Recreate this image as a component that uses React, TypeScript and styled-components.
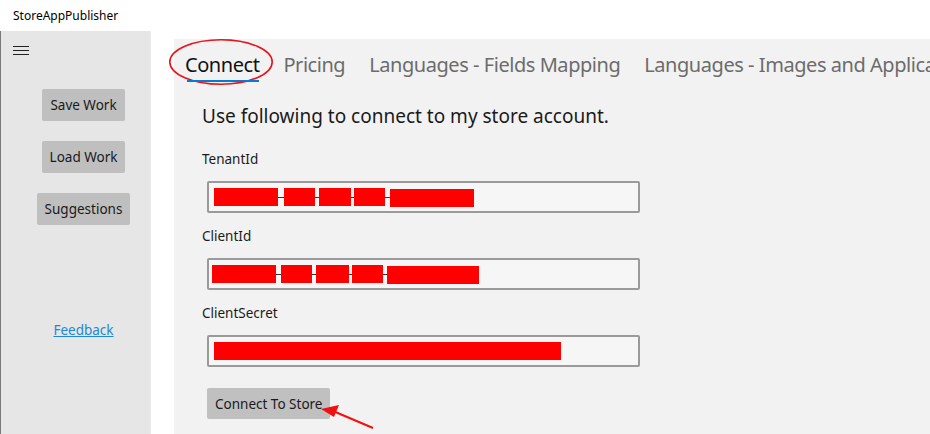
import React from "react";
import styled, { createGlobalStyle } from "styled-components";

const Global = createGlobalStyle`
  html, body { margin: 0; padding: 0; background: #ffffff; }
  body { width: 930px; height: 434px; overflow: hidden; font-family: "Segoe UI", "Noto Sans", "Open Sans", sans-serif; color: #1a1a1a; }
  * { box-sizing: border-box; }
`;

const Window = styled.div`
  width: 930px;
  height: 434px;
  display: flex;
  flex-direction: column;
  overflow: hidden;
  background: #ffffff;
`;

const TitleBar = styled.div`
  height: 31px;
  flex: none;
  display: flex;
  align-items: center;
  padding-left: 13px;
  font-size: 12px;
  color: #000;
`;

const Body = styled.div`
  flex: 1;
  display: flex;
  min-height: 0;
`;

const Sidebar = styled.div`
  width: 151px;
  flex: none;
  background: #e6e6e6;
  border-left: 1px solid #7a7a7a;
  border-right: 1px solid #ececec;
  display: flex;
  flex-direction: column;
  align-items: center;
  padding-left: 16px;
  position: relative;
`;

const Hamburger = styled.div`
  position: absolute;
  left: 12px;
  top: 15px;
  width: 16px;
  display: flex;
  flex-direction: column;
  gap: 3px;
  & > span { display: block; height: 1px; background: #222; }
`;

const SideButton = styled.button`
  height: 32px;
  padding: 0 8px;
  border: none;
  border-radius: 2px;
  background: #bfbfbf;
  font-family: inherit;
  font-size: 13.5px;
  color: #1a1a1a;
  margin-top: ${(p: { $mt: number }) => p.$mt}px;
`;

const FeedbackLink = styled.a`
  margin-top: 96px;
  font-size: 13.5px;
  color: #1f86d8;
  text-decoration: underline;
`;

const Spacer = styled.div`
  width: 23px;
  flex: none;
  background: #ffffff;
`;

const Main = styled.div`
  flex: 1;
  margin-top: 8px;
  background: #f2f2f2;
  position: relative;
  min-width: 0;
`;

const TabRow = styled.div`
  display: flex;
  gap: 24px;
  padding-left: 11px;
  height: 52px;
  align-items: flex-start;
  white-space: nowrap;
`;

const Tab = styled.div<{ $active?: boolean }>`
  position: relative;
  flex: none;
  font-size: 20px;
  letter-spacing: -0.45px;
  line-height: 28px;
  margin-top: 12px;
  color: ${(p) => (p.$active ? "#111" : "#6c6c6c")};
  padding-bottom: 3px;
  &::after {
    content: "";
    display: ${(p) => (p.$active ? "block" : "none")};
    position: absolute;
    left: 2px;
    right: 0;
    bottom: 0;
    height: 2px;
    background: #0a78d4;
  }
`;

const Ellipse = styled.svg`
  position: absolute;
  left: -16px;
  top: -12px;
  overflow: visible;
  pointer-events: none;
`;

const Content = styled.div`
  padding-left: 28px;
  display: flex;
  flex-direction: column;
`;

const Heading = styled.div`
  font-size: 19px;
  line-height: 26px;
  margin-top: 12px;
  color: #1a1a1a;
`;

const Label = styled.div`
  font-size: 13.5px;
  line-height: 18px;
  margin-top: ${(p: { $mt: number }) => p.$mt}px;
  color: #1a1a1a;
`;

const Field = styled.div<{ $pad: number }>`
  margin-left: 5px;
  margin-top: 13px;
  width: 433px;
  height: 32px;
  border: 2px solid #9a9a9a;
  border-radius: 2px;
  background: #f6f6f6;
  display: flex;
  align-items: center;
  padding-left: ${(p) => p.$pad}px;
`;

const Redact = styled.span<{ $w: number; $dy?: number }>`
  display: block;
  width: ${(p) => p.$w}px;
  height: 18px;
  background: #ff0000;
  flex: none;
  transform: translateY(${(p) => p.$dy ?? 0}px);
`;

const Dash = styled.span<{ $w: number }>`
  display: block;
  width: ${(p) => p.$w}px;
  height: 1px;
  background: #333;
  flex: none;
`;

const ConnectWrap = styled.div`
  position: relative;
  margin-left: 5px;
  margin-top: 21px;
  align-self: flex-start;
`;

const ConnectButton = styled.button`
  height: 31px;
  padding: 0 8px;
  border: none;
  border-radius: 2px;
  background: #c0c0c0;
  font-family: inherit;
  font-size: 13.5px;
  color: #1a1a1a;
`;

const Arrow = styled.svg`
  position: absolute;
  left: 100px;
  top: 10px;
  overflow: visible;
  pointer-events: none;
`;

type Seg = { w: number; gap?: number; dy?: number };

const RedactedValue = ({ segs, pad }: { segs: Seg[]; pad: number }) => (
  <Field $pad={pad}>
    {segs.map((s, i) => (
      <React.Fragment key={i}>
        <Redact $w={s.w} $dy={s.dy} />
        {s.gap ? <Dash $w={s.gap} /> : null}
      </React.Fragment>
    ))}
  </Field>
);

export default function App() {
  return (
    <>
      <Global />
      <Window>
        <TitleBar>StoreAppPublisher</TitleBar>
        <Body>
          <Sidebar>
            <Hamburger>
              <span />
              <span />
              <span />
            </Hamburger>
            <SideButton $mt={58}>Save Work</SideButton>
            <SideButton $mt={20}>Load Work</SideButton>
            <SideButton $mt={20}>Suggestions</SideButton>
            <FeedbackLink href="#">Feedback</FeedbackLink>
          </Sidebar>
          <Spacer />
          <Main>
            <TabRow>
              <Tab $active>
                Connect
                <Ellipse width="104" height="46" viewBox="0 0 104 46">
                  <ellipse cx="52" cy="23" rx="51.2" ry="22.2" fill="none" stroke="#e8141b" strokeWidth="1.6" />
                </Ellipse>
              </Tab>
              <Tab>Pricing</Tab>
              <Tab>Languages - Fields Mapping</Tab>
              <Tab>Languages - Images and Applications</Tab>
            </TabRow>
            <Content>
              <Heading>Use following to connect to my store account.</Heading>
              <Label $mt={21}>TenantId</Label>
              <RedactedValue
                pad={5}
                segs={[
                  { w: 64, gap: 6 },
                  { w: 31, gap: 4 },
                  { w: 32, gap: 3 },
                  { w: 31, gap: 5 },
                  { w: 84, dy: 1 },
                ]}
              />
              <Label $mt={14}>ClientId</Label>
              <RedactedValue
                pad={3}
                segs={[
                  { w: 64, gap: 5 },
                  { w: 31, gap: 4 },
                  { w: 33, gap: 3 },
                  { w: 31, gap: 4 },
                  { w: 92, dy: 1 },
                ]}
              />
              <Label $mt={14}>ClientSecret</Label>
              <RedactedValue pad={5} segs={[{ w: 347 }]} />
              <ConnectWrap>
                <ConnectButton>Connect To Store</ConnectButton>
                <Arrow width="60" height="30" viewBox="0 0 60 30">
                  <line x1="66" y1="30" x2="26" y2="13" stroke="#f01010" strokeWidth="2" />
                  <polygon points="14,11 32,7 27,19" fill="#f01010" />
                </Arrow>
              </ConnectWrap>
            </Content>
          </Main>
        </Body>
      </Window>
    </>
  );
}
